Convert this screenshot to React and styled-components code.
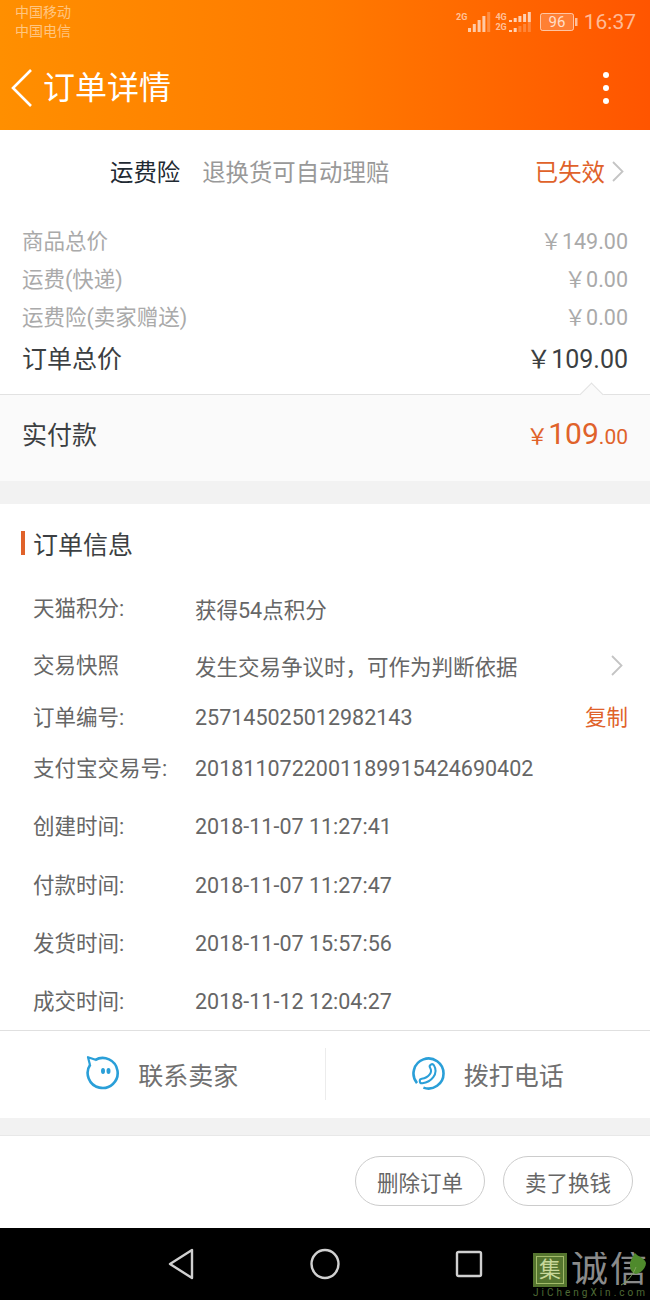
import React from 'react'
import styled, { createGlobalStyle } from 'styled-components'

const GlobalStyle = createGlobalStyle`
html, body {
  margin: 0;
  padding: 0;
  background: #fff;
}
* {
  box-sizing: border-box;
}
`

const cjk = `"Roboto", "Noto Sans CJK SC", sans-serif`

const Page = styled.div`
width: 650px;
height: 1300px;
overflow: hidden;
font-family: ${cjk};
display: flex;
flex-direction: column;
`

const Header = styled.div`
height: 130px;
flex: none;
background: linear-gradient(90deg, #ff8f00 0%, #ff7a00 50%, #ff5500 100%);
display: flex;
flex-direction: column;
`

const StatusBar = styled.div`
height: 44px;
padding: 3px 14px 0 15px;
display: flex;
justify-content: space-between;
`

const Carriers = styled.div`
font-size: 14px;
line-height: 19px;
color: rgba(255, 255, 255, 0.5);
`

const StatusRight = styled.div`
display: flex;
align-items: center;
height: 38px;
color: rgba(255, 255, 255, 0.6);
`

const Clock = styled.span`
font-size: 21px;
margin-left: 6px;
`

const NavBar = styled.div`
flex: 1;
display: flex;
align-items: center;
padding: 2px 41px 0 10px;
color: #fff;
`

const NavTitle = styled.div`
font-size: 32px;
line-height: 40px;
margin-left: 9px;
flex: 1;
`

const Dots = styled.div`
display: flex;
flex-direction: column;
gap: 7px;
`

const Dot = styled.span`
width: 6px;
height: 6px;
border-radius: 50%;
background: #fff;
`

const InsuranceRow = styled.div`
height: 87px;
flex: none;
padding: 0 26px 5px 110px;
display: flex;
align-items: center;
font-size: 23.4px;
`

const InsuranceName = styled.span`
color: #1f2a33;
`

const InsuranceNote = styled.span`
color: #999;
margin-left: 22px;
flex: 1;
`

const Expired = styled.span`
color: #e0622a;
margin-right: 6px;
`

const PriceList = styled.div`
flex: none;
height: 177px;
padding: 3px 22px 0;
`

const PriceRow = styled.div`
height: 38px;
display: flex;
justify-content: space-between;
align-items: center;
font-size: 21.5px;
color: #aaa;
`

const TotalRow = styled(PriceRow)`
height: 46px;
font-size: 25px;
color: #3c3f42;
`

const PaidPanel = styled.div`
position: relative;
flex: none;
height: 87px;
padding: 0 22px 10px;
background: #fafafa;
border-top: 1px solid #e2e2e2;
display: flex;
justify-content: space-between;
align-items: center;
font-size: 25px;
color: #3c3f42;
`

const Notch = styled.span`
position: absolute;
right: 50px;
top: -9px;
width: 17px;
height: 17px;
background: #fafafa;
border-top: 1px solid #e2e2e2;
border-left: 1px solid #e2e2e2;
transform: rotate(45deg);
`

const PaidAmount = styled.span`
color: #e0622a;
display: flex;
align-items: baseline;
`

const PaidPart = styled.span`
font-size: ${props => props.size}px;
`

const Gap = styled.div`
flex: none;
height: ${props => props.h}px;
background: #f2f2f2;
`

const InfoSection = styled.div`
flex: none;
height: 526px;
`

const SectionTitle = styled.div`
height: 76px;
padding: 2px 0 0 21px;
display: flex;
align-items: center;
font-size: 25px;
color: #3c3f42;
`

const TitleMark = styled.span`
width: 4px;
height: 24px;
background: #e0622a;
margin-right: 8px;
`

const InfoList = styled.div`
padding: 0 22px 0 33px;
`

const InfoRow = styled.div`
height: ${props => props.h}px;
display: flex;
align-items: center;
font-size: 21.5px;
color: #666;
`

const InfoLabel = styled.span`
width: 162px;
flex: none;
padding-bottom: 3px;
`

const InfoValue = styled.span`
flex: 1;
`

const CopyLink = styled.span`
color: #e0622a;
padding-bottom: 3px;
`

const RowChevron = styled.span`
display: flex;
margin-right: 5px;
`

const ContactBar = styled.div`
flex: none;
height: 88px;
border-top: 1px solid #e0e0e0;
display: flex;
align-items: center;
`

const ContactItem = styled.div`
flex: 1;
height: 52px;
margin-top: -1px;
display: flex;
align-items: center;
justify-content: center;
gap: 18px;
font-size: 25px;
color: #707070;
& + & {
  border-left: 1px solid #ececec;
}
`

const ActionBar = styled.div`
flex: none;
height: 93px;
border-top: 1px solid #e8e8e8;
padding: 20px 17px 0 0;
display: flex;
justify-content: flex-end;
gap: 18px;
`

const PillButton = styled.div`
width: 130px;
height: 50px;
border: 1px solid #ccc;
border-radius: 25px;
display: flex;
align-items: center;
justify-content: center;
font-size: 21.5px;
color: #666;
`

const SystemNav = styled.div`
position: relative;
flex: 1;
background: #000;
display: flex;
align-items: center;
justify-content: center;
padding-bottom: 1px;
`

const NavKeys = styled.div`
display: flex;
align-items: center;
gap: 115px;
`

const Watermark = styled.div`
position: absolute;
left: 533px;
top: 24px;
width: 117px;
height: 48px;
overflow: hidden;
`

const WatermarkTop = styled.div`
display: flex;
align-items: center;
height: 35px;
`

const WatermarkBox = styled.div`
width: 34px;
height: 34px;
flex: none;
background: #55752f;
padding: 3px;
`

const WatermarkInner = styled.div`
width: 100%;
height: 100%;
border: 1px solid #a3bb6a;
color: #c8d89a;
font-size: 22px;
line-height: 25px;
text-align: center;
`

const WatermarkText = styled.div`
font-size: 37px;
line-height: 35px;
letter-spacing: 2px;
color: #8a8a8a;
margin-left: 4px;
white-space: nowrap;
`

const WatermarkSite = styled.div`
font-size: 10px;
letter-spacing: 3px;
line-height: 12px;
color: #4f6b36;
white-space: nowrap;
`

const Leaf = styled.svg`
position: absolute;
right: 2px;
top: 0;
`

const SmallTag = styled.div`
font-size: 9px;
line-height: 10px;
font-weight: 700;
`

const SignalGroup = styled.div`
display: flex;
align-items: flex-start;
gap: 1px;
margin-right: 4px;
`

const StackRow = styled.div`
display: flex;
align-items: center;
gap: 2px;
height: 10.6px;
`

const Stack = styled.div`
display: flex;
flex-direction: column;
margin-right: 8px;
`

const Chevron = ({ size = 21 }) => (
    <svg width={size * 0.62} height={size} viewBox="0 0 13 21" fill="none" stroke="#c4c4c4" strokeWidth="1.8">
        <path d="M2 1l9.500 9.500L2 20" />
    </svg>
)

const Signal = () => (
    <svg width="23" height="20" viewBox="0 0 23 20">
        {[0, 1, 2, 3, 4].map(i => {
            const h = 4 + i * 4
            return <rect key={i} x={i * 4.8} y={20 - h} width="3" height={h} fill="#fff" opacity={i < 4 ? 0.65 : 0.25} />
        })}
    </svg>
)

const Mini = ({ on }) => (
    <svg width="23" height="10" viewBox="0 0 23 10">
        {[0, 1, 2, 3, 4].map(i => (
            <rect key={i} x={i * 4.7} y={8 - i * 2} width="3" height={2 + i * 2} fill="#fff" opacity={i < on ? 0.7 : 0.22} />
        ))}
    </svg>
)

const Battery = () => (
    <svg width="38" height="18" viewBox="0 0 38 18">
        <rect x="0.5" y="0.5" width="33" height="17" rx="2" fill="rgba(255,255,255,0.2)" stroke="rgba(255,255,255,0.6)" />
        <rect x="35" y="5" width="2.500" height="8" fill="rgba(255,255,255,0.6)" />
        <text x="17" y="14" fontSize="15" textAnchor="middle" fill="rgba(255,255,255,0.75)" fontFamily="Roboto">96</text>
    </svg>
)

const Smile = () => (
    <svg width="34" height="36" viewBox="0 0 34 36" fill="none" stroke="#2a9fd8" strokeWidth="2.6">
        <path d="M9 4.100A15 15 0 1 1 4.300 8.500" />
        <path d="M9.500 3.800L2 1.200l2 7.800" strokeLinejoin="round" strokeWidth="2.200" />
        <ellipse cx="17" cy="15" rx="2" ry="3" fill="#2a9fd8" stroke="none" />
        <ellipse cx="22.500" cy="15" rx="2" ry="3" fill="#2a9fd8" stroke="none" />
    </svg>
)

const Phone = () => (
    <svg width="34" height="36" viewBox="0 0 34 36" fill="none" stroke="#2a9fd8">
        <path d="M5 27.100A15 15 0 1 1 11.400 31.600" strokeWidth="2.600" />
        <path d="M20 10.500C24 17 18 24 10 25" strokeWidth="6.500" strokeLinecap="round" />
        <path d="M20 10.500C24 17 18 24 10 25" strokeWidth="2.500" strokeLinecap="round" stroke="#fff" />
    </svg>
)

const PRICES = [
    ['商品总价', '￥149.00'],
    ['运费(快递)', '￥0.00'],
    ['运费险(卖家赠送)', '￥0.00'],
]

const App = () => {
    return (
        <Page>
            <GlobalStyle />
            <Header>
                <StatusBar>
                    <Carriers>
                        <div>中国移动</div>
                        <div>中国电信</div>
                    </Carriers>
                    <StatusRight>
                        <SignalGroup>
                            <SmallTag>2G</SmallTag>
                            <Signal />
                        </SignalGroup>
                        <Stack>
                            <StackRow><SmallTag>4G</SmallTag><Mini on={5} /></StackRow>
                            <StackRow><SmallTag>2G</SmallTag><Mini on={2} /></StackRow>
                        </Stack>
                        <Battery />
                        <Clock>16:37</Clock>
                    </StatusRight>
                </StatusBar>
                <NavBar>
                    <svg width="24" height="40" viewBox="0 0 24 40" fill="none" stroke="#fff" strokeWidth="2.600">
                        <path d="M21 2L3 20l18 18" />
                    </svg>
                    <NavTitle>订单详情</NavTitle>
                    <Dots><Dot /><Dot /><Dot /></Dots>
                </NavBar>
            </Header>

            <InsuranceRow>
                <InsuranceName>运费险</InsuranceName>
                <InsuranceNote>退换货可自动理赔</InsuranceNote>
                <Expired>已失效</Expired>
                <Chevron />
            </InsuranceRow>

            <PriceList>
                {PRICES.map(([label, value]) => (
                    <PriceRow key={label}>
                        <span>{label}</span>
                        <span>{value}</span>
                    </PriceRow>
                ))}
                <TotalRow>
                    <span>订单总价</span>
                    <span>￥109.00</span>
                </TotalRow>
            </PriceList>

            <PaidPanel>
                <Notch />
                <span>实付款</span>
                <PaidAmount>
                    <PaidPart size={22}>￥</PaidPart>
                    <PaidPart size={30}>109</PaidPart>
                    <PaidPart size={21}>.00</PaidPart>
                </PaidAmount>
            </PaidPanel>

            <Gap h={23} />

            <InfoSection>
                <SectionTitle>
                    <TitleMark />
                    订单信息
                </SectionTitle>
                <InfoList>
                    <InfoRow h={56}><InfoLabel>天猫积分:</InfoLabel><InfoValue>获得54点积分</InfoValue></InfoRow>
                    <InfoRow h={58}><InfoLabel>交易快照</InfoLabel><InfoValue>发生交易争议时，可作为判断依据</InfoValue><RowChevron><Chevron /></RowChevron></InfoRow>
                    <InfoRow h={46}><InfoLabel>订单编号:</InfoLabel><InfoValue>257145025012982143</InfoValue><CopyLink>复制</CopyLink></InfoRow>
                    <InfoRow h={56}><InfoLabel>支付宝交易号:</InfoLabel><InfoValue>2018110722001189915424690402</InfoValue></InfoRow>
                    <InfoRow h={60}><InfoLabel>创建时间:</InfoLabel><InfoValue>2018-11-07 11:27:41</InfoValue></InfoRow>
                    <InfoRow h={58}><InfoLabel>付款时间:</InfoLabel><InfoValue>2018-11-07 11:27:47</InfoValue></InfoRow>
                    <InfoRow h={58}><InfoLabel>发货时间:</InfoLabel><InfoValue>2018-11-07 15:57:56</InfoValue></InfoRow>
                    <InfoRow h={58}><InfoLabel>成交时间:</InfoLabel><InfoValue>2018-11-12 12:04:27</InfoValue></InfoRow>
                </InfoList>
            </InfoSection>

            <ContactBar>
                <ContactItem><Smile />联系卖家</ContactItem>
                <ContactItem><Phone />拨打电话</ContactItem>
            </ContactBar>

            <Gap h={17} />

            <ActionBar>
                <PillButton>删除订单</PillButton>
                <PillButton>卖了换钱</PillButton>
            </ActionBar>

            <SystemNav>
                <NavKeys>
                    <svg width="28" height="32" viewBox="0 0 28 32" fill="none" stroke="#d0d0d0" strokeWidth="2.400" strokeLinejoin="round">
                        <path d="M25 2v28L3 16z" />
                    </svg>
                    <svg width="30" height="32" viewBox="0 0 30 32" fill="none" stroke="#d0d0d0" strokeWidth="2.400">
                        <ellipse cx="15" cy="16" rx="13.500" ry="14" />
                    </svg>
                    <svg width="28" height="28" viewBox="0 0 28 28" fill="none" stroke="#d0d0d0" strokeWidth="2.400" strokeLinejoin="round">
                        <rect x="2" y="2" width="24" height="24" rx="1.500" />
                    </svg>
                </NavKeys>
                <Watermark>
                    <WatermarkTop>
                        <WatermarkBox><WatermarkInner>集</WatermarkInner></WatermarkBox>
                        <WatermarkText>诚信</WatermarkText>
                    </WatermarkTop>
                    <WatermarkSite>JiChengXin.com</WatermarkSite>
                    <Leaf width="28" height="36" viewBox="0 0 28 36">
                        <path d="M15 1c2 3 10 5 11 10 0 5-5 10-10 11-4-1-6-4-6-9 0-5 3-8 5-12z" fill="#4f8a2c" />
                        <path d="M1 33c6-3 12-10 15-18" stroke="#7fa35a" strokeWidth="1" fill="none" />
                    </Leaf>
                </Watermark>
            </SystemNav>
        </Page>
    )
}

export default App
